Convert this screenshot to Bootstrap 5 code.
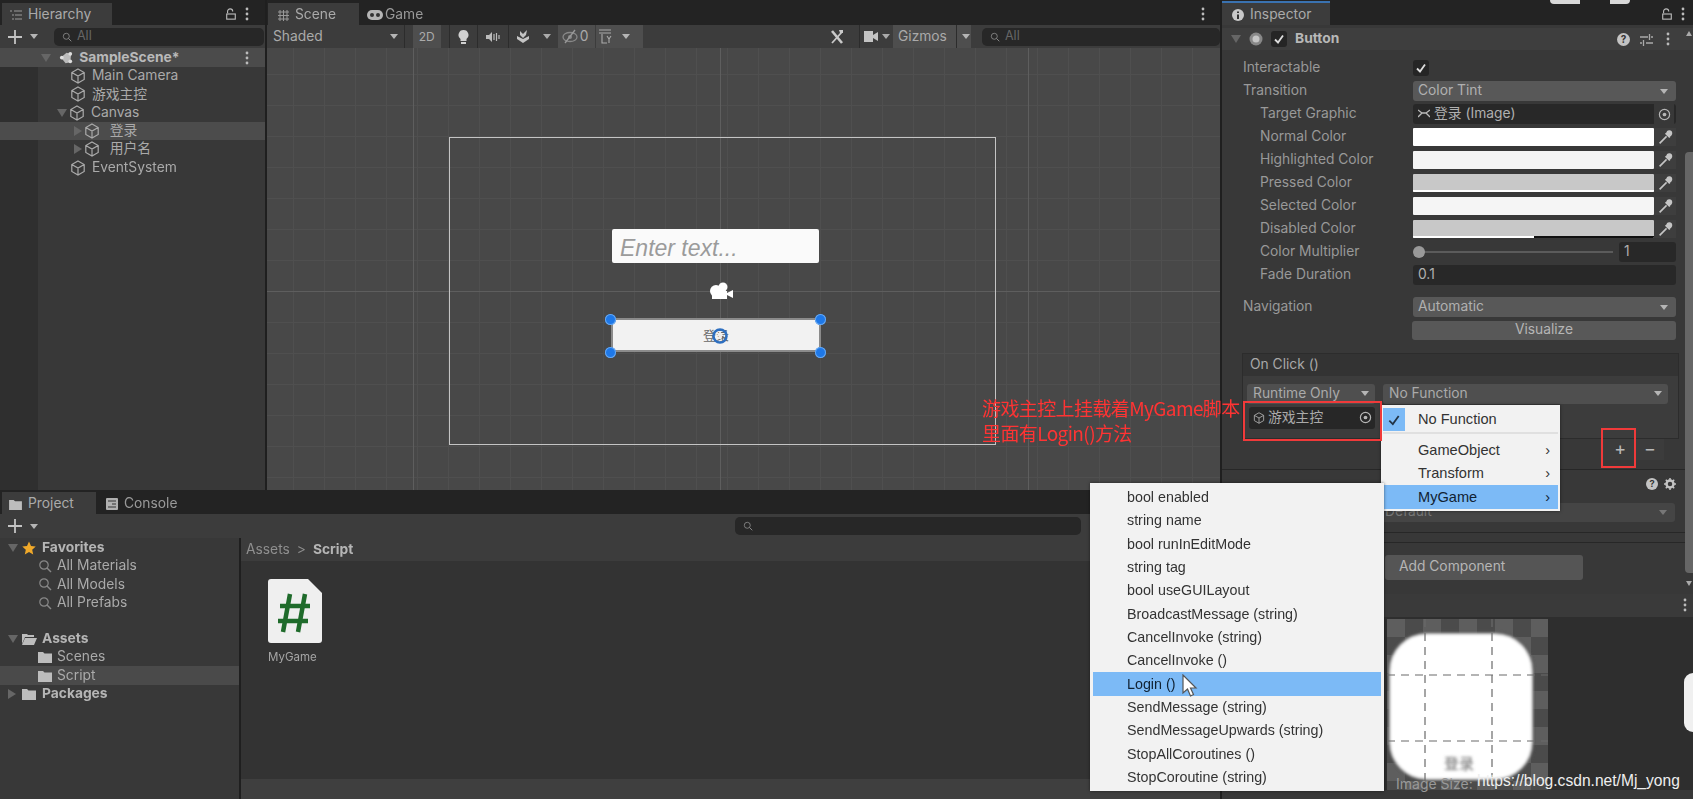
<!DOCTYPE html>
<html lang="zh">
<head>
<meta charset="UTF-8">
<title>Unity Editor</title>
<link href="https://cdn.jsdelivr.net/npm/bootstrap@5.3.3/dist/css/bootstrap.min.css" rel="stylesheet">
<style>
html,body{height:100%;overflow:hidden;background:#1f1f1f}
body{font-family:"Inter","Noto Sans CJK SC",sans-serif;font-size:13.8px;line-height:1;color:#aaa}
svg{display:block;flex:none}
.app{width:1693px;height:799px;filter:blur(.5px)}
.left-col{width:1220px}
.top-row{height:490px}
.hier{width:265px;margin-right:2px}
.tabbar{height:25px;background:#232323;padding-top:3px}
.tab-item{height:22px;padding:2px 10px 0;color:#999;gap:6px}
.tab-item.on{background:#3c3c3c;color:#aaa}
.tool-strip{height:23px;background:#3c3c3c}
.search-box{height:18px;background:#272727;border-radius:5px;color:#666;padding-left:8px;gap:5px;font-size:12.5px}
.pane{background:#383838}
.tree-gutter{background:linear-gradient(90deg,#2f2f2f 38px,#383838 38px)}
.tree-row{height:18.3px;white-space:nowrap;color:#aaa}
.tree-row.scene-head{height:19px;background:#4b4b4b;font-weight:700;color:#b9b9b9}
.tree-row.sel{background:#4c4c4c}
.arrow-d{width:0;height:0;border-left:5px solid transparent;border-right:5px solid transparent;border-top:8px solid #666;flex:none}
.arrow-r{width:0;height:0;border-top:5px solid transparent;border-bottom:5px solid transparent;border-left:8px solid #666;flex:none}
.caret-sm{width:0;height:0;border-left:4px solid transparent;border-right:4px solid transparent;border-top:5px solid #b5b5b5;flex:none}
.ind-1{padding-left:70px}
.ico-gap{gap:2px}
.scene-pane{width:953px}
.scene-tools{height:23px;background:#3c3c3c;position:relative;color:#aaa}
.st-sep{width:1px;height:23px;background:#2c2c2c;flex:none}
.st-cell{height:23px;gap:4px;padding:0 5px}
.st-cell.lit{background:#4e4e4e}
.scene-view{height:442px;position:relative;overflow:hidden;background-color:#484848;
  background-image:linear-gradient(#5e5e5e,#5e5e5e),linear-gradient(90deg,#5e5e5e,#5e5e5e),linear-gradient(90deg,#5e5e5e,#5e5e5e),linear-gradient(90deg,#5e5e5e,#5e5e5e),
  linear-gradient(#4f4f4f 1px,transparent 1px),linear-gradient(90deg,#4f4f4f 1px,transparent 1px);
  background-size:100% 1px,1px 100%,1px 100%,1px 100%,31px 31px,31px 31px;
  background-position:0 243px,146px 0,453px 0,761px 0,0 26px,26px 0;background-repeat:no-repeat,no-repeat,no-repeat,no-repeat,repeat,repeat}
.canvas-rect{position:absolute;left:182px;top:89px;width:547px;height:308px;border:1.5px solid #c4c4c4}
.ui-input{position:absolute;left:345px;top:181px;width:207px;height:34px;background:#fafafa;border-radius:2px;color:#9b9b9b;font:italic 23px "Liberation Sans",sans-serif;padding:6px 8px}
.ui-button{position:absolute;left:344px;top:270px;width:210px;height:34px;background:#f2f2f2;border:2px solid #8b8b8b;color:#666;font-size:13px;text-align:center;line-height:30px}
.handle{position:absolute;width:11px;height:11px;border-radius:50%;background:#1e78e8;box-shadow:inset 0 0 0 1px #6aa9f0}
.cam-ico{position:absolute;left:441px;top:233px}
.gear-ico{position:absolute;left:444px;top:279px}
.proj-tabbar{height:24px;background:#232323;padding-top:2px}
.proj-strip{height:24px;background:#3c3c3c}
.proj-body{height:261px}
.proj-side{width:239px;background:#383838;margin-right:2px}
.proj-row{height:18.3px;white-space:nowrap;color:#aaa}
.proj-row.head{font-weight:700;color:#b5b5b5}
.proj-row.sel{background:#4a4a4a}
.proj-main{background:#333}
.crumbs{height:23px;background:#3c3c3c;color:#8f8f8f;padding-left:5px;gap:7px}
.crumbs b{color:#b5b5b5}
.asset-tile{padding:18px 0 0 27px;width:120px}
.asset-name{font-size:11.5px;margin-top:9px;color:#a5a5a5}
.proj-foot{height:20px;background:#3f3f3f}
.insp{width:471px;margin-left:2px;background:#383838;position:relative}
.comp-head{height:22px;background:#3e3e3e;margin-top:3px;padding-left:5px;padding-right:23px}
.comp-head b{color:#b8b8b8;margin-left:8px}
.chk{width:16px;height:16px;background:#252525;border-radius:3px;flex:none}
.insp-body{padding:6.5px 17px 0 21px}
.insp-row{height:23px}
.insp-label{width:170px;flex:none;color:#999}
.insp-label.sub{padding-left:17px}
.ctl-drop{height:20px;background:#585858;border-radius:3px;color:#b0b0b0;padding:0 8px 0 5px;flex:1}
.ctl-field{height:20px;background:#282828;border-radius:3px;color:#b0b0b0;padding:0 5px;flex:1}
.target-btn{width:20px;height:20px;background:#383838;flex:none;margin-right:-3px}
.swatch-box{height:18px;width:241px;background:#fff;position:relative;flex:none;border-radius:1px;overflow:hidden}
.swatch-box.hi{background:#f5f5f5}
.swatch-box.pr{background:#c8c8c8}
.sw-alpha{position:absolute;left:0;right:0;bottom:0;height:2px;background:#fff}
.sw-half{position:absolute;right:0;bottom:0;width:50%;height:2px;background:#111}
.pick-btn{width:22px;height:18px;background:#3e3e3e;flex:none}
.track{height:2px;background:#5b5b5b;width:195px;margin:0 6px 0 5px;position:relative}
.knob{position:absolute;left:-5px;top:-5px;width:12px;height:12px;border-radius:50%;background:#999}
.btn-unity{--bs-btn-padding-y:0;--bs-btn-padding-x:0;--bs-btn-font-size:13.8px;--bs-btn-color:#b5b5b5;--bs-btn-bg:#585858;--bs-btn-border-width:0;--bs-btn-border-radius:3px;--bs-btn-line-height:1;background:#585858;color:#b5b5b5}
.visual-btn{margin-left:169px;width:264px;height:19px;margin-top:2px;display:block}
.onclick-box{margin:14px 0 0 21px;width:435px;height:84px;background:#3c3c3c;outline:1px solid #2c2c2c}
.onclick-head{height:22px;background:#333;padding-left:7px;color:#a8a8a8}
.onclick-body{padding:8px 10px 0 4px}
.evt-drop{height:20px;background:#4f4f4f;border-radius:3px;color:#aaa;padding:0 6px}
.evt-obj{width:126px;height:22px;background:#272727;border-radius:3px;margin-top:3px;color:#aaa;padding:0 3px 0 4px;gap:3px}
.addrem{width:442px;height:23px}
.addrem-in{width:64px;height:22px;background:#3c3c3c;color:#b9b9b9;font-size:18px;gap:18px}
.sect-line{height:1px;background:#272727}
.matl-row{height:28px;padding-right:17px;gap:6px}
.default-drop{height:19px;background:#454545;margin:5px 18px 0 21px;border-radius:3px;color:#777;padding:0 8px 0 142px}
.add-comp{width:198px;height:25px;margin:12px 0 0 163px;display:block;text-align:left;padding-left:14px;background:#555}
.prev-bar{height:23px;background:#3a3a3a;margin-top:14px;padding-right:3px}
.prev-body{height:173px;background:#2e2e2e;padding-left:165px;padding-top:2px}
.checker{width:161px;height:171px;background:repeating-conic-gradient(#4b4b4b 0 25%,#5e5e5e 0 50%) 0 0/36px 36px}
.scroll-thumb{position:absolute;right:0;top:152px;width:8px;height:421px;background:#666;border-radius:4px 0 0 4px}
.scroll-up{position:absolute;right:1px;top:31px;width:0;height:0;border-left:3px solid transparent;border-right:3px solid transparent;border-bottom:5px solid #aaa}
.scroll-dn{position:absolute;right:1px;top:581px;width:0;height:0;border-left:3px solid transparent;border-right:3px solid transparent;border-top:5px solid #aaa}
.pop-menu{--bs-dropdown-bg:#f2f2f2;--bs-dropdown-border-radius:0;--bs-dropdown-border-width:0;--bs-dropdown-padding-y:0;--bs-dropdown-min-width:0;--bs-dropdown-link-color:#333;--bs-dropdown-font-size:14px;
  font-family:"Liberation Sans","Noto Sans CJK SC",sans-serif;box-shadow:0 0 3px rgba(0,0,0,.5)}
.pop-menu .dropdown-item{display:flex;align-items:center;line-height:1;white-space:nowrap}
.pop-one{left:1381px;top:405px;width:179px;height:106px;padding:3px 2px 0}
.pop-one .dropdown-item{height:23.4px;padding:0 8px 0 35px;position:relative;font-size:14.6px}
.pop-one .dropdown-item.act{background:#7cbaf6;color:#123}
.pop-two{left:1090px;top:483px;width:294px;height:308px;padding:2.5px 3px 0}
.pop-two .dropdown-item{height:23.35px;padding:0 0 0 34px;font-size:14.3px}
.pop-two .dropdown-item.act{background:#7cbaf6;color:#123;position:relative}
.check-cell{position:absolute;left:0;top:0;width:22px;height:23.4px;background:#7cbaf6;display:flex;align-items:center;justify-content:center}
.pop-rule{height:2px;background:#e0e0e0;margin:1px 0 4px}
.chev-r{margin-left:auto}
.red-frame{position:absolute;border:2.5px solid #f03a3a;z-index:1100}
.red-note{position:absolute;left:982px;top:396px;color:#f33;font:19px/24.5px "Noto Sans CJK SC",sans-serif;white-space:nowrap;z-index:1100;letter-spacing:-.6px}
.mark-url{position:absolute;left:1477px;top:772px;color:#eee;font:15.6px "Liberation Sans",sans-serif;z-index:1100}
.mark-size{position:absolute;left:1396px;top:775px;color:#999;font:14px "Inter",sans-serif;z-index:1090}
.mouse-ptr{position:absolute;left:1182px;top:674px;z-index:1100}
.side-blob{position:absolute;right:0;top:673px;width:9px;height:59px;background:#f0f0f0;border-radius:9px 0 0 9px;z-index:1100}
.top-scrap{position:absolute;left:1550px;top:0;width:80px;height:4px;background:linear-gradient(90deg,#d8d8d8 0 30px,#232323 30px 60px,#d8d8d8 60px);border-radius:0 0 6px 6px;z-index:1100}
.blue-top{position:absolute;left:0;top:1px;width:108px;height:2px;background:#3a72b0}
</style>
</head>
<body>
<svg width="0" height="0" class="position-absolute">
  <symbol id="i-cube" viewBox="0 0 16 16"><path d="M8 1 14.200 4.500v7L8 15l-6.200-3.500v-7zM1.800 4.500 8 8l6.200-3.500M8 8v7" fill="none" stroke="#aaa" stroke-width="1.200"/></symbol>
  <symbol id="i-dots" viewBox="0 0 4 14"><circle cx="2" cy="2" r="1.400" fill="#bbb"/><circle cx="2" cy="7" r="1.400" fill="#bbb"/><circle cx="2" cy="12" r="1.400" fill="#bbb"/></symbol>
  <symbol id="i-lock" viewBox="0 0 14 14"><path d="M3 6V4a3 3 0 0 1 6 0" fill="none" stroke="#bbb" stroke-width="1.300"/><rect x="2" y="7" width="10" height="6" fill="none" stroke="#bbb" stroke-width="1.300"/></symbol>
  <symbol id="i-plus" viewBox="0 0 14 14"><path d="M7 0v14M0 7h14" stroke="#c4c4c4" stroke-width="1.800"/></symbol>
  <symbol id="i-find" viewBox="0 0 14 14"><circle cx="6" cy="6" r="4.200" fill="none" stroke="#888" stroke-width="1.200"/><path d="m9 9 4 4" stroke="#888" stroke-width="1.400"/></symbol>
  <symbol id="i-folder" viewBox="0 0 14 12"><path d="M0 1h5l1.500 1.500H14V12H0z" fill="#bdbdbd"/></symbol>
  <symbol id="i-pick" viewBox="0 0 14 14"><path d="M1.500 12.500 8 6M7 3l4 4M9 1.500c1-1 2.500-.5 3 0s1 2 0 3L10.500 6 8 3.500z" stroke="#c5c5c5" stroke-width="1.500" fill="#c5c5c5"/></symbol>
  <symbol id="i-target" viewBox="0 0 14 14"><circle cx="7" cy="7" r="5.500" fill="none" stroke="#b5b5b5" stroke-width="1.300"/><circle cx="7" cy="7" r="2" fill="#b5b5b5"/></symbol>
  <symbol id="i-check" viewBox="0 0 12 12"><path d="m2 6.500 3 3 5-7" fill="none" stroke="#ddd" stroke-width="1.800"/></symbol>
</svg>

<div class="app d-flex position-relative">
  <div class="left-col d-flex flex-column">
    <div class="top-row d-flex">
      <!-- hierarchy -->
      <div class="hier d-flex flex-column pane">
        <div class="tabbar d-flex align-items-start">
          <div class="tab-item on d-flex align-items-center" style="width:110px;margin-left:2px;padding-left:8px">
            <svg width="12" height="10" viewBox="0 0 12 10"><path d="M0 1h2M4 1h8M2 5h2M5 5h7M2 9h2M5 9h7" stroke="#999" stroke-width="1.200"/></svg>Hierarchy
          </div>
          <div class="ms-auto d-flex align-items-center gap-2 pe-3 pt-1"><svg width="12" height="12"><use href="#i-lock"/></svg><svg width="4" height="14"><use href="#i-dots"/></svg></div>
        </div>
        <div class="tool-strip d-flex align-items-center ps-2">
          <svg width="14" height="14"><use href="#i-plus"/></svg><span class="caret-sm ms-2"></span>
          <div class="search-box d-flex align-items-center ms-3" style="width:210px"><svg width="10" height="10"><use href="#i-find"/></svg>All</div>
        </div>
        <div class="tree-gutter flex-grow-1">
          <div class="tree-row scene-head d-flex align-items-center" style="padding-left:41px"><span class="arrow-d me-2"></span>
            <svg width="15" height="15" viewBox="0 0 16 16" style="margin-right:2px"><path d="M2 8 8 3l5 1-1 9-5 1z" fill="#bbb"/><circle cx="3" cy="8" r="2" fill="#ddd"/><circle cx="12" cy="4" r="2" fill="#ddd"/><circle cx="12" cy="12" r="2" fill="#ddd"/></svg>&nbsp;SampleScene*
            <svg width="4" height="14" class="ms-auto me-3"><use href="#i-dots"/></svg></div>
          <div class="tree-row d-flex align-items-center ico-gap ind-1"><svg width="16" height="16"><use href="#i-cube"/></svg>&nbsp;Main Camera</div>
          <div class="tree-row d-flex align-items-center ico-gap ind-1"><svg width="16" height="16"><use href="#i-cube"/></svg>&nbsp;游戏主控</div>
          <div class="tree-row d-flex align-items-center ico-gap" style="padding-left:57px"><span class="arrow-d"></span><svg width="16" height="16"><use href="#i-cube"/></svg>&nbsp;Canvas</div>
          <div class="tree-row sel d-flex align-items-center ico-gap" style="padding-left:74px"><span class="arrow-r"></span><svg width="16" height="16"><use href="#i-cube"/></svg>&nbsp;&nbsp;登录</div>
          <div class="tree-row d-flex align-items-center ico-gap" style="padding-left:74px"><span class="arrow-r"></span><svg width="16" height="16"><use href="#i-cube"/></svg>&nbsp;&nbsp;用户名</div>
          <div class="tree-row d-flex align-items-center ico-gap ind-1"><svg width="16" height="16"><use href="#i-cube"/></svg>&nbsp;EventSystem</div>
        </div>
      </div>
      <!-- scene -->
      <div class="scene-pane d-flex flex-column">
        <div class="tabbar d-flex align-items-start">
          <div class="tab-item on d-flex align-items-center" style="width:91px;margin-left:1px">
            <svg width="11" height="11" viewBox="0 0 11 11"><path d="M0 2h11M0 5.500h11M0 9h11M2 0v11M5.500 0v11M9 0v11" stroke="#999"/></svg>Scene</div>
          <div class="tab-item d-flex align-items-center" style="gap:2px;padding-left:8px">
            <svg width="16" height="10" viewBox="0 0 16 10"><rect width="16" height="10" rx="5" fill="#b5b5b5"/><circle cx="5" cy="5" r="2" fill="#333"/><circle cx="11" cy="5" r="2" fill="#333"/></svg>Game</div>
          <svg width="4" height="14" class="ms-auto mt-1" style="margin-right:15px"><use href="#i-dots"/></svg>
        </div>
        <div class="scene-tools d-flex align-items-center">
          <div class="d-flex align-items-center justify-content-between" style="width:138px;padding:0 6px"><span>Shaded</span><span class="caret-sm"></span></div>
          <span class="st-sep"></span>
          <div class="st-cell lit d-flex align-items-center ms-2" style="width:28px;font-size:12px;padding:0 6px">2D</div>
          <span class="st-sep ms-2"></span>
          <div class="st-cell d-flex align-items-center" style="padding:0 8px"><svg width="11" height="14" viewBox="0 0 11 14"><path d="M5.500 0a5 5 0 0 1 3 9v2h-6V9a5 5 0 0 1 3-9zM3 12h5v2H3z" fill="#d0d0d0"/></svg></div>
          <span class="st-sep"></span>
          <div class="st-cell d-flex align-items-center" style="padding:0 8px"><svg width="14" height="12" viewBox="0 0 14 12"><path d="M0 4h3l3-3v10L3 8H0z" fill="#bbb"/><path d="M8 3v6M10.500 2v8M13 4v4" stroke="#bbb" stroke-width="1.200"/></svg></div>
          <span class="st-sep"></span>
          <div class="st-cell d-flex align-items-center" style="padding:0 6px"><svg width="16" height="15" viewBox="0 0 16 15"><path d="M2 7l6 3 6-3v3l-6 4-6-4zM5 2l3 3 4-4-1 5-3 3-3-3z" fill="#c4c4c4"/></svg><span class="caret-sm ms-2" style="border-top-color:#aaa"></span></div>
          <div class="st-cell lit d-flex align-items-center" style="width:38px;color:#aaa;padding:0 4px;gap:2px;margin-left:1px"><svg width="16" height="15" viewBox="0 0 16 15"><ellipse cx="8" cy="8" rx="7" ry="4.500" fill="none" stroke="#888" stroke-width="1.300"/><circle cx="8" cy="8" r="2" fill="#888"/><path d="M3 14 13 1" stroke="#999" stroke-width="1.300"/></svg>0</div>
          <div class="st-cell lit d-flex align-items-center" style="width:47px;padding:0 3px 0 2px;gap:9px;margin-left:1px"><svg width="15" height="15" viewBox="0 0 15 15"><path d="M1 1h12M1 4h12M4 5v9h5" fill="none" stroke="#aaa" stroke-width="1.100"/><path d="M9 7l2 3 2-3M11 10v4" fill="none" stroke="#aaa" stroke-width="1.100"/></svg><span class="caret-sm"></span></div>
          <div class="d-flex align-items-center" style="margin-left:180px">
            <div class="st-cell d-flex align-items-center" style="width:36px;padding:0 7px"><svg width="14" height="16" viewBox="0 0 14 16"><path d="M2 2l10 12" stroke="#c9c9c9" stroke-width="2.600"/><path d="M12 3 2 14" stroke="#c9c9c9" stroke-width="1.800"/><path d="M9 1h4v3h-3z" fill="#c9c9c9"/></svg></div>
            <span class="st-sep"></span>
            <div class="st-cell d-flex align-items-center" style="width:33px;padding:0 4px"><svg width="14" height="11" viewBox="0 0 14 11"><rect width="9" height="11" fill="#c4c4c4"/><path d="M9 4l5-3v9L9 7z" fill="#c4c4c4"/></svg><span class="caret-sm" style="border-top-color:#aaa"></span></div>
            <div class="st-cell lit d-flex align-items-center" style="width:78px;padding:0 5px;gap:5px"><span>Gizmos</span><span class="st-sep ms-1"></span><span class="caret-sm"></span></div>
            <div class="search-box d-flex align-items-center" style="width:238px;margin-left:11px"><svg width="10" height="10"><use href="#i-find"/></svg>All</div>
          </div>
        </div>
        <div class="scene-view flex-grow-1">
          <div class="canvas-rect"></div>
          <div class="ui-input">Enter text...</div>
          <div class="ui-button">登录</div>
          <span class="handle" style="left:338px;top:266px"></span><span class="handle" style="left:548px;top:266px"></span>
          <span class="handle" style="left:338px;top:299px"></span><span class="handle" style="left:548px;top:299px"></span>
          <svg class="cam-ico" width="26" height="20" viewBox="0 0 26 20"><circle cx="8" cy="10" r="6" fill="#fff"/><circle cx="15" cy="6" r="4.500" fill="#fff"/><rect x="4" y="10" width="15" height="8" fill="#fff"/><path d="M19 12l6-3v8l-6-3z" fill="#fff"/></svg>
          <svg class="gear-ico" width="18" height="18" viewBox="0 0 18 18"><circle cx="9" cy="9" r="6.500" fill="none" stroke="#2d6fc0" stroke-width="2.500"/><path d="M9 4l3.500 5h-2v3h-3V9h-2z" fill="#eee"/></svg>
        </div>
      </div>
    </div>
    <!-- project -->
    <div class="flex-grow-1 d-flex flex-column">
      <div class="proj-tabbar d-flex align-items-start">
        <div class="tab-item on d-flex align-items-center" style="width:94px;margin-left:2px;padding-left:7px"><svg width="13" height="11"><use href="#i-folder"/></svg>Project</div>
        <div class="tab-item d-flex align-items-center" style="padding-left:10px"><svg width="12" height="12" viewBox="0 0 12 12"><rect width="12" height="12" rx="1" fill="#b0b0b0"/><path d="M2 3h8M6 6h4M2 9h8" stroke="#333"/></svg>Console</div>
      </div>
      <div class="proj-strip d-flex align-items-center ps-2">
        <svg width="14" height="14"><use href="#i-plus"/></svg><span class="caret-sm ms-2"></span>
        <div class="search-box d-flex align-items-center" style="width:346px;margin-left:697px"><svg width="10" height="10"><use href="#i-find"/></svg></div>
      </div>
      <div class="proj-body d-flex flex-grow-1">
        <div class="proj-side">
          <div class="proj-row head d-flex align-items-center" style="padding-left:8px;height:19px"><span class="arrow-d me-1"></span><svg width="14" height="14" viewBox="0 0 14 14" style="margin-right:6px"><path d="M7 .5 9 5l4.700.5-3.500 3.200 1 4.800L7 11l-4.200 2.500 1-4.800L.3 5.500 5 5z" fill="#f0a92a"/></svg>Favorites</div>
          <div class="proj-row d-flex align-items-center" style="padding-left:38px"><svg width="14" height="14" style="margin-right:5px"><use href="#i-find"/></svg>All Materials</div>
          <div class="proj-row d-flex align-items-center" style="padding-left:38px"><svg width="14" height="14" style="margin-right:5px"><use href="#i-find"/></svg>All Models</div>
          <div class="proj-row d-flex align-items-center" style="padding-left:38px"><svg width="14" height="14" style="margin-right:5px"><use href="#i-find"/></svg>All Prefabs</div>
          <div style="height:18px"></div>
          <div class="proj-row head d-flex align-items-center" style="padding-left:8px"><span class="arrow-d me-1"></span><svg width="15" height="12" viewBox="0 0 15 12" style="margin-right:5px"><path d="M0 1h5l1 1h6v2H3L0 11zM3 5h12l-3 7H0z" fill="#bdbdbd"/></svg>Assets</div>
          <div class="proj-row d-flex align-items-center" style="padding-left:38px"><svg width="14" height="12" style="margin-right:5px"><use href="#i-folder"/></svg>Scenes</div>
          <div class="proj-row sel d-flex align-items-center" style="padding-left:38px"><svg width="14" height="12" style="margin-right:5px"><use href="#i-folder"/></svg>Script</div>
          <div class="proj-row head d-flex align-items-center" style="padding-left:8px"><span class="arrow-r" style="margin-right:6px"></span><svg width="14" height="12" style="margin-right:6px"><use href="#i-folder"/></svg>Packages</div>
        </div>
        <div class="proj-main flex-grow-1 d-flex flex-column">
          <div class="crumbs d-flex align-items-center"><span>Assets</span><span>&gt;</span><b>Script</b></div>
          <div class="asset-tile flex-grow-1">
            <svg width="54" height="64" viewBox="0 0 54 64"><path d="M3 0h37l14 14v47a3 3 0 0 1-3 3H3a3 3 0 0 1-3-3V3a3 3 0 0 1 3-3z" fill="#efefef"/><path d="M22 15l-7 38M37 15l-7 38M12 27h30M10 42h30" stroke="#1f6b2b" stroke-width="4.500" fill="none"/></svg>
            <div class="asset-name">MyGame</div>
          </div>
          <div class="proj-foot"></div>
        </div>
      </div>
    </div>
  </div>

  <!-- inspector -->
  <div class="insp">
    <span class="blue-top"></span>
    <div class="tabbar d-flex align-items-start">
      <div class="tab-item on d-flex align-items-center" style="width:108px;padding-left:10px"><svg width="12" height="12" viewBox="0 0 12 12"><circle cx="6" cy="6" r="6" fill="#c9c9c9"/><path d="M6 2.500v1.500M6 5.500V10" stroke="#333" stroke-width="2"/></svg>Inspector</div>
      <div class="ms-auto d-flex align-items-center gap-2 pe-2 pt-1"><svg width="12" height="12"><use href="#i-lock"/></svg><svg width="4" height="14"><use href="#i-dots"/></svg></div>
    </div>
    <div class="comp-head d-flex align-items-center">
      <span class="arrow-d ms-1"></span>
      <svg width="14" height="14" viewBox="0 0 14 14" class="ms-2"><circle cx="7" cy="7" r="6.500" fill="#888"/><circle cx="7" cy="7" r="3.500" fill="#c5c5c5"/></svg>
      <span class="chk d-flex align-items-center justify-content-center ms-2"><svg width="12" height="12"><use href="#i-check"/></svg></span>
      <b>Button</b>
      <svg width="13" height="13" viewBox="0 0 13 13" class="ms-auto"><circle cx="6.500" cy="6.500" r="6.500" fill="#c4c4c4"/><text x="6.500" y="10" text-anchor="middle" font-size="10" font-weight="700" fill="#333" font-family="Inter">?</text></svg>
      <svg width="13" height="13" viewBox="0 0 13 13" style="margin-left:10px"><path d="M0 4h8M11 4h2M0 10h2M6 10h7M9.500 1v6M3.500 7v6" stroke="#aaa" stroke-width="1.300"/></svg>
      <svg width="4" height="14" style="margin-left:13px"><use href="#i-dots"/></svg>
    </div>
    <div class="insp-body">
      <div class="insp-row d-flex align-items-center"><span class="insp-label">Interactable</span><span class="chk d-flex align-items-center justify-content-center"><svg width="12" height="12"><use href="#i-check"/></svg></span></div>
      <div class="insp-row d-flex align-items-center"><span class="insp-label">Transition</span><div class="ctl-drop d-flex align-items-center justify-content-between">Color Tint<span class="caret-sm"></span></div></div>
      <div class="insp-row d-flex align-items-center"><span class="insp-label sub">Target Graphic</span><div class="ctl-field d-flex align-items-center justify-content-between"><span class="d-flex align-items-center gap-1"><svg width="12" height="10" viewBox="0 0 12 10"><path d="M0 1l4 3-4 4M12 1 8 4l4 4M4 4h4" fill="none" stroke="#bbb" stroke-width="1.300"/></svg>登录 (Image)</span><span class="target-btn d-flex align-items-center justify-content-center"><svg width="13" height="13"><use href="#i-target"/></svg></span></div></div>
      <div class="insp-row d-flex align-items-center"><span class="insp-label sub">Normal Color</span><div class="swatch-box"></div><span class="pick-btn d-flex align-items-center justify-content-center"><svg width="15" height="15"><use href="#i-pick"/></svg></span></div>
      <div class="insp-row d-flex align-items-center"><span class="insp-label sub">Highlighted Color</span><div class="swatch-box hi"></div><span class="pick-btn d-flex align-items-center justify-content-center"><svg width="15" height="15"><use href="#i-pick"/></svg></span></div>
      <div class="insp-row d-flex align-items-center"><span class="insp-label sub">Pressed Color</span><div class="swatch-box pr"><span class="sw-alpha"></span></div><span class="pick-btn d-flex align-items-center justify-content-center"><svg width="15" height="15"><use href="#i-pick"/></svg></span></div>
      <div class="insp-row d-flex align-items-center"><span class="insp-label sub">Selected Color</span><div class="swatch-box hi"></div><span class="pick-btn d-flex align-items-center justify-content-center"><svg width="15" height="15"><use href="#i-pick"/></svg></span></div>
      <div class="insp-row d-flex align-items-center"><span class="insp-label sub">Disabled Color</span><div class="swatch-box pr"><span class="sw-alpha"></span><span class="sw-half"></span></div><span class="pick-btn d-flex align-items-center justify-content-center"><svg width="15" height="15"><use href="#i-pick"/></svg></span></div>
      <div class="insp-row d-flex align-items-center"><span class="insp-label sub">Color Multiplier</span><div class="track"><span class="knob"></span></div><div class="ctl-field d-flex align-items-center">1</div></div>
      <div class="insp-row d-flex align-items-center"><span class="insp-label sub">Fade Duration</span><div class="ctl-field d-flex align-items-center">0.1</div></div>
      <div class="insp-row d-flex align-items-center" style="margin-top:9px"><span class="insp-label">Navigation</span><div class="ctl-drop d-flex align-items-center justify-content-between">Automatic<span class="caret-sm"></span></div></div>
      <button type="button" class="btn btn-unity visual-btn">Visualize</button>
    </div>
    <div class="onclick-box">
      <div class="onclick-head d-flex align-items-center">On Click ()</div>
      <div class="onclick-body">
        <div class="d-flex gap-2">
          <div class="evt-drop d-flex align-items-center justify-content-between" style="width:128px">Runtime Only<span class="caret-sm"></span></div>
          <div class="evt-drop d-flex align-items-center justify-content-between flex-grow-1">No Function<span class="caret-sm"></span></div>
        </div>
        <div class="evt-obj d-flex align-items-center" style="margin-left:2px"><svg width="12" height="12"><use href="#i-cube"/></svg>游戏主控<svg width="13" height="13" class="ms-auto"><use href="#i-target"/></svg></div>
      </div>
    </div>
    <div class="addrem d-flex justify-content-end">
      <div class="addrem-in d-flex align-items-center justify-content-end pe-2">+ <span>−</span></div>
    </div>
    <div class="sect-line" style="margin-top:8px"></div>
    <div class="matl-row d-flex align-items-center justify-content-end">
      <svg width="12" height="12" viewBox="0 0 13 13"><circle cx="6.500" cy="6.500" r="6.500" fill="#c4c4c4"/><text x="6.500" y="10" text-anchor="middle" font-size="10" font-weight="700" fill="#333" font-family="Inter">?</text></svg>
      <svg width="12" height="12" viewBox="0 0 12 12"><circle cx="6" cy="6" r="3.500" fill="none" stroke="#c4c4c4" stroke-width="2.500"/><path d="M6 0v2.500M6 9.500V12M0 6h2.500M9.500 6H12M1.800 1.800l1.800 1.800M8.400 8.400l1.800 1.800M1.800 10.200l1.800-1.800M8.400 3.600l1.800-1.800" stroke="#c4c4c4" stroke-width="1.500"/></svg>
    </div>
    <div class="default-drop d-flex align-items-center justify-content-between">Default<span class="caret-sm" style="border-top-color:#777"></span></div>
    <div class="sect-line" style="margin-top:10px"></div>
    <div class="sect-line" style="margin-top:9px"></div>
    <button type="button" class="btn btn-unity add-comp">Add Component</button>
    <div class="prev-bar d-flex align-items-center justify-content-end"><svg width="4" height="14" style="margin-right:3px"><use href="#i-dots"/></svg></div>
    <div class="prev-body">
      <div class="checker">
        <svg width="161" height="171" viewBox="0 0 161 171">
          <defs><filter id="soft"><feGaussianBlur stdDeviation="1.500"/></filter></defs>
          <rect x="2" y="14" width="144" height="147" rx="38" fill="#fff" stroke="#555" stroke-width="2" filter="url(#soft)"/>
          <path d="M38 0v171M105 0v171M0 56h161M0 122h161" stroke="#6a6a6a" stroke-width="1.200" stroke-dasharray="8 6" fill="none"/>
          <text x="72" y="150" text-anchor="middle" font-size="15" fill="#666" font-family="Noto Sans CJK SC" filter="url(#soft)">登录</text>
        </svg>
      </div>
    </div>
    <span class="scroll-up"></span><span class="scroll-thumb"></span><span class="scroll-dn"></span>
  </div>

  <!-- menus and annotation on top -->
  <div class="dropdown-menu show pop-menu pop-one">
    <a class="dropdown-item" href="#"><span class="check-cell"><svg width="14" height="14" viewBox="0 0 12 12"><path d="m2 6.500 3 3 5-7" fill="none" stroke="#234" stroke-width="1.500"/></svg></span>No Function</a>
    <div class="pop-rule"></div>
    <a class="dropdown-item" href="#">GameObject<span class="chev-r">›</span></a>
    <a class="dropdown-item" href="#">Transform<span class="chev-r">›</span></a>
    <a class="dropdown-item act" href="#">MyGame<span class="chev-r">›</span></a>
  </div>
  <div class="dropdown-menu show pop-menu pop-two">
    <a class="dropdown-item" href="#">bool enabled</a>
    <a class="dropdown-item" href="#">string name</a>
    <a class="dropdown-item" href="#">bool runInEditMode</a>
    <a class="dropdown-item" href="#">string tag</a>
    <a class="dropdown-item" href="#">bool useGUILayout</a>
    <a class="dropdown-item" href="#">BroadcastMessage (string)</a>
    <a class="dropdown-item" href="#">CancelInvoke (string)</a>
    <a class="dropdown-item" href="#">CancelInvoke ()</a>
    <a class="dropdown-item act" href="#">Login ()</a>
    <a class="dropdown-item" href="#">SendMessage (string)</a>
    <a class="dropdown-item" href="#">SendMessageUpwards (string)</a>
    <a class="dropdown-item" href="#">StopAllCoroutines ()</a>
    <a class="dropdown-item" href="#">StopCoroutine (string)</a>
  </div>
  <svg class="mouse-ptr" width="16" height="24" viewBox="0 0 16 24"><path d="M1 1v18l4.500-4 3 7 3-1.500-3-6.500H14z" fill="#fff" stroke="#555" stroke-width="1.200"/></svg>
  <div class="red-note">游戏主控上挂载着MyGame脚本<br>里面有Login()方法</div>
  <span class="red-frame" style="left:1243px;top:401px;width:139px;height:40px"></span>
  <span class="red-frame" style="left:1601px;top:428px;width:35px;height:40px"></span>
  <span class="mark-size">Image Size:</span>
  <span class="mark-url">https://blog.csdn.net/Mj_yong</span>
  <span class="side-blob"></span>
  <span class="top-scrap"></span>
</div>
<script src="https://cdn.jsdelivr.net/npm/bootstrap@5.3.3/dist/js/bootstrap.bundle.min.js"></script>
</body>
</html>
